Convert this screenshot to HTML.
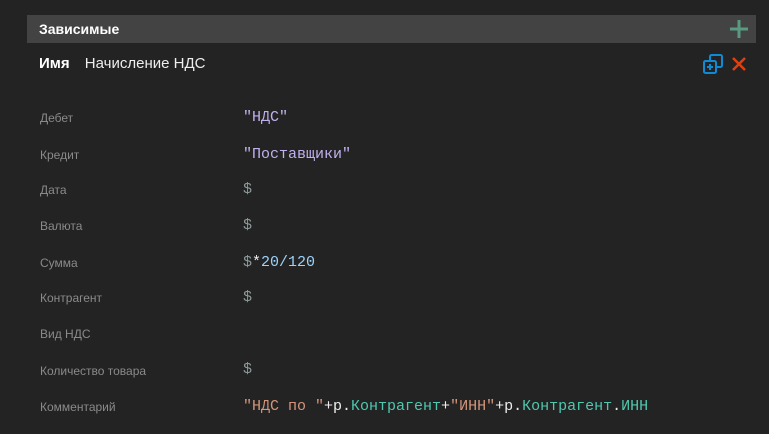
<!DOCTYPE html>
<html><head><meta charset="utf-8"><style>
body{margin:0;width:769px;height:434px;background:#232323;font-family:"Liberation Sans",sans-serif;overflow:hidden;position:relative}
.hdr{position:absolute;left:27px;top:15px;width:729px;height:28px;background:#434343}
.hdr span{position:absolute;left:12px;top:6px;color:#fff;font-weight:bold;font-size:14px}
.name{position:absolute;left:39px;top:55px;font-size:15px;color:#eee}
.name b{color:#fff;margin-right:11px}
.lbl{position:absolute;left:40px;font-size:12px;color:#8a8a8a}
.val{position:absolute;left:243px;font-family:"Liberation Mono",monospace;font-size:15px;color:#ddd;white-space:pre}
.s{color:#c2b0ee}.d{color:#8c9a9a}.n{color:#9cd2fa}.o{color:#d4957a}.t{color:#4ec9b0}.w{color:#eee}
</style></head><body>
<div class="hdr"><span>Зависимые</span>
<svg style="position:absolute;left:702px;top:4px" width="20" height="20"><path d="M10 1V19M1 10H19" stroke="#5a9a82" stroke-width="3"/></svg></div>
<div class="name"><b>Имя</b> Начисление НДС</div>
<svg style="position:absolute;left:703px;top:54px" width="20" height="20"><rect x="7" y="1" width="12" height="12" rx="1.5" fill="none" stroke="#0f8ad4" stroke-width="2"/><rect x="1" y="7" width="12" height="12" rx="1.5" fill="#232323" stroke="#0f8ad4" stroke-width="2"/><path d="M7 10V16M4 13H10" stroke="#0f8ad4" stroke-width="2"/></svg>
<svg style="position:absolute;left:732px;top:57px" width="14" height="14"><path d="M1 1L13 13M13 1L1 13" stroke="#e0400f" stroke-width="2.5"/></svg>
<div class="lbl" style="top:111px">Дебет</div><div class="val" style="top:109px"><span class="s">"НДС"</span></div>
<div class="lbl" style="top:148px">Кредит</div><div class="val" style="top:146px"><span class="s">"Поставщики"</span></div>
<div class="lbl" style="top:183px">Дата</div><div class="val" style="top:181px"><span class="d">$</span></div>
<div class="lbl" style="top:219px">Валюта</div><div class="val" style="top:217px"><span class="d">$</span></div>
<div class="lbl" style="top:256px">Сумма</div><div class="val" style="top:254px"><span class="d">$</span><span class="w">*</span><span class="n">20/120</span></div>
<div class="lbl" style="top:291px">Контрагент</div><div class="val" style="top:289px"><span class="d">$</span></div>
<div class="lbl" style="top:327px">Вид НДС</div>
<div class="lbl" style="top:364px">Количество товара</div><div class="val" style="top:361px"><span class="d">$</span></div>
<div class="lbl" style="top:400px">Комментарий</div><div class="val" style="top:398px"><span class="o">"НДС по "</span><span class="w">+р.</span><span class="t">Контрагент</span><span class="w">+</span><span class="o">"ИНН"</span><span class="w">+р.</span><span class="t">Контрагент</span><span class="w">.</span><span class="t">ИНН</span></div>
</body></html>
